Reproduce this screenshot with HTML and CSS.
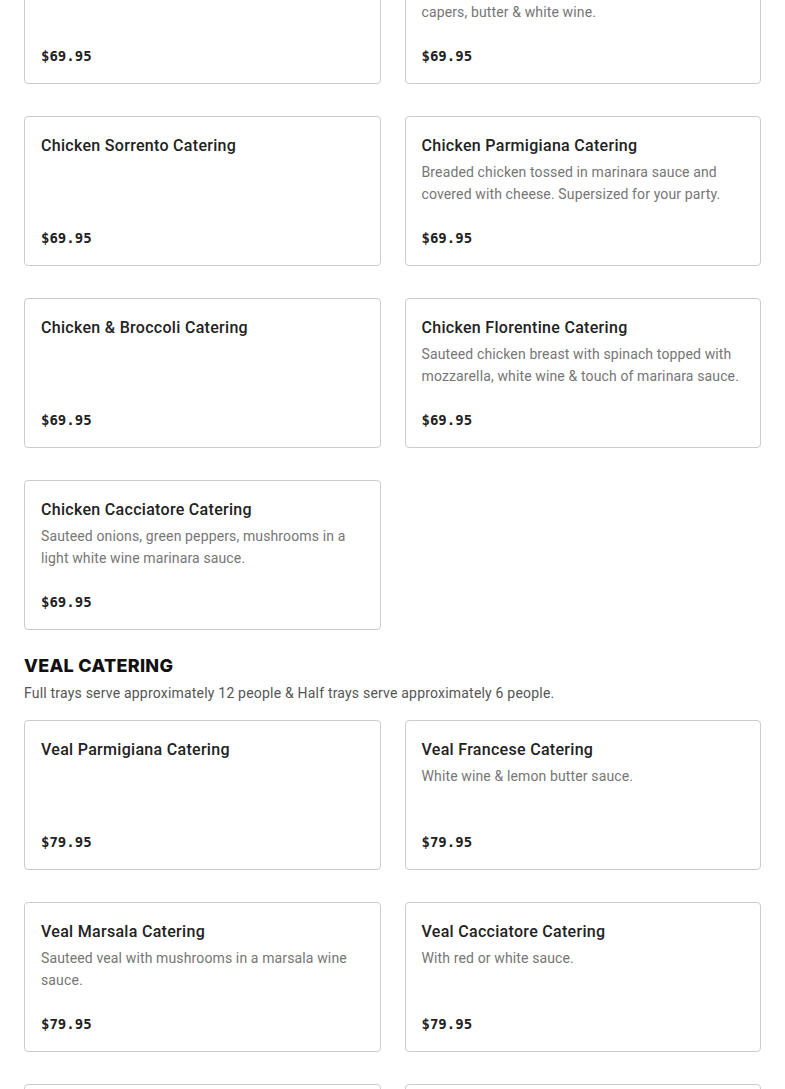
FILE: index.html
```html
<!DOCTYPE html>
<html lang="en">
<head>
  <meta charset="UTF-8">
  <title>Catering Menu</title>
  <link rel="stylesheet" href="styles.css">
</head>
<body>

  <main class="menu">

    <!-- Chicken (scrolled, top of section is above the fold) -->
    <section class="category category-scrolled">
      <div class="items">
        <article class="item">
          <h3 class="item-name">Chicken Marsala Catering</h3>
          <span class="item-price">$69.95</span>
        </article>
        <article class="item">
          <h3 class="item-name">Chicken Piccata Catering</h3>
          <p class="item-desc">Sauteed chicken breast with lemon,<br>capers, butter &amp; white wine.</p>
          <span class="item-price">$69.95</span>
        </article>
        <article class="item">
          <h3 class="item-name">Chicken Sorrento Catering</h3>
          <span class="item-price">$69.95</span>
        </article>
        <article class="item">
          <h3 class="item-name">Chicken Parmigiana Catering</h3>
          <p class="item-desc">Breaded chicken tossed in marinara sauce and covered with cheese. Supersized for your party.</p>
          <span class="item-price">$69.95</span>
        </article>
        <article class="item">
          <h3 class="item-name">Chicken &amp; Broccoli Catering</h3>
          <span class="item-price">$69.95</span>
        </article>
        <article class="item">
          <h3 class="item-name">Chicken Florentine Catering</h3>
          <p class="item-desc">Sauteed chicken breast with spinach topped with mozzarella, white wine &amp; touch of marinara sauce.</p>
          <span class="item-price">$69.95</span>
        </article>
        <article class="item">
          <h3 class="item-name">Chicken Cacciatore Catering</h3>
          <p class="item-desc">Sauteed onions, green peppers, mushrooms in a light white wine marinara sauce.</p>
          <span class="item-price">$69.95</span>
        </article>
      </div>
    </section>

    <!-- Veal -->
    <section class="category">
      <h2 class="category-title">Veal Catering</h2>
      <p class="category-note">Full trays serve approximately 12 people &amp; Half trays serve approximately 6 people.</p>
      <div class="items">
        <article class="item">
          <h3 class="item-name">Veal Parmigiana Catering</h3>
          <span class="item-price">$79.95</span>
        </article>
        <article class="item">
          <h3 class="item-name">Veal Francese Catering</h3>
          <p class="item-desc">White wine &amp; lemon butter sauce.</p>
          <span class="item-price">$79.95</span>
        </article>
        <article class="item">
          <h3 class="item-name">Veal Marsala Catering</h3>
          <p class="item-desc">Sauteed veal with mushrooms in a marsala wine sauce.</p>
          <span class="item-price">$79.95</span>
        </article>
        <article class="item">
          <h3 class="item-name">Veal Cacciatore Catering</h3>
          <p class="item-desc">With red or white sauce.</p>
          <span class="item-price">$79.95</span>
        </article>
        <article class="item">
          <h3 class="item-name">Veal Piccata Catering</h3>
          <p class="item-desc">Lemon, capers, butter &amp; white wine.</p>
          <span class="item-price">$79.95</span>
        </article>
        <article class="item">
          <h3 class="item-name">Veal Sorrento Catering</h3>
          <span class="item-price">$79.95</span>
        </article>
      </div>
    </section>

  </main>

</body>
</html>
```

FILE: styles.css
```css
body {
  margin: 0;
  font-family: Roboto, "Liberation Sans", sans-serif;
  background-color: #fff;
  color: #222;
}
.menu {
  padding: 0 24px;
}
.category-scrolled {
  /* page is scrolled: first row starts above the viewport */
  margin-top: -66px;
}
.category {
  margin-bottom: 24px;
}
.category-title {
  margin: 0;
  font-family: Inter, sans-serif;
  font-size: 18px;
  font-weight: 800;
  line-height: 24px;
  letter-spacing: 0.3px;
  text-transform: uppercase;
  color: #111;
}
.category-note {
  margin: 4px 0 16px;
  font-size: 14px;
  line-height: 22px;
  letter-spacing: 0.2px;
  color: #555;
}
.items {
  display: grid;
  grid-template-columns: 1fr 1fr;
  column-gap: 24px;
  row-gap: 32px;
}
.item {
  display: flex;
  flex-direction: column;
  min-height: 150px;
  box-sizing: border-box;
  padding: 16px;
  border: 1px solid #ccc;
  border-radius: 4px;
}
.item-name {
  margin: 0;
  font-size: 16px;
  font-weight: 500;
  line-height: 26px;
  letter-spacing: 0.3px;
  color: #222;
}
.item-desc {
  margin: 2px 0 0;
  font-size: 14px;
  line-height: 22px;
  letter-spacing: 0.13px;
  color: #767676;
}
.item-price {
  margin-top: auto;
  padding-top: 22px;
  font-family: "DejaVu Sans Mono", "Liberation Mono", monospace;
  font-size: 14px;
  font-weight: bold;
  line-height: 22px;
  color: #222;
}
```
